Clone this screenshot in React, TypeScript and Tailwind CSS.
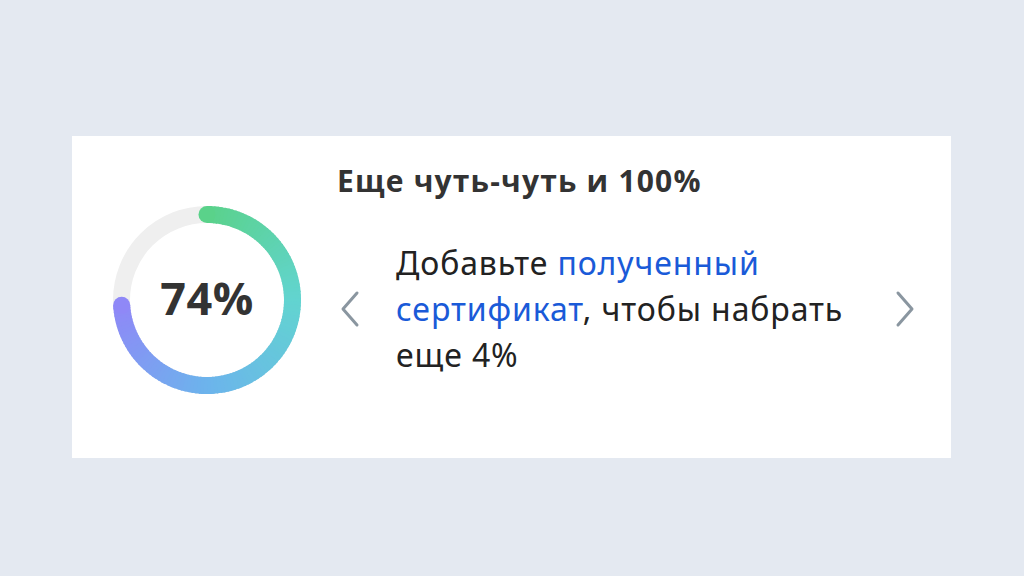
import React from "react";

const stops: [number, [number, number, number]][] = [
  [0, [90, 210, 138]],
  [0.25, [98, 212, 208]],
  [0.5, [108, 180, 236]],
  [0.74, [143, 136, 247]],
];

function colorAt(t: number) {
  for (let i = 0; i < stops.length - 1; i++) {
    const [a, ca] = stops[i];
    const [b, cb] = stops[i + 1];
    if (t >= a && t <= b) {
      const k = (t - a) / (b - a);
      const c = ca.map((v, j) => Math.round(v + (cb[j] - v) * k));
      return `rgb(${c[0]},${c[1]},${c[2]})`;
    }
  }
  const c = stops[stops.length - 1][1];
  return `rgb(${c[0]},${c[1]},${c[2]})`;
}

function Ring() {
  const size = 188;
  const cx = 94;
  const cy = 94;
  const r = 85.5;
  const sw = 17;
  const pct = 0.74;
  const n = 120;
  const pt = (t: number) => {
    const a = t * 2 * Math.PI - Math.PI / 2;
    return [cx + r * Math.cos(a), cy + r * Math.sin(a)];
  };
  const segs = [];
  for (let i = 0; i < n; i++) {
    const t0 = (pct * i) / n;
    const t1 = Math.min(pct, (pct * (i + 1)) / n + 0.002);
    const [x0, y0] = pt(t0);
    const [x1, y1] = pt(t1);
    segs.push(
      <path
        key={i}
        d={`M ${x0} ${y0} A ${r} ${r} 0 0 1 ${x1} ${y1}`}
        stroke={colorAt((t0 + t1) / 2)}
        strokeWidth={sw}
        fill="none"
      />
    );
  }
  const [sx, sy] = pt(0);
  const [ex, ey] = pt(pct);
  return (
    <div className="relative w-[188px] h-[188px]">
      <svg width={size} height={size} viewBox={`0 0 ${size} ${size}`}>
        <circle cx={cx} cy={cy} r={r} stroke="#efefef" strokeWidth={sw} fill="none" />
        {segs}
        <circle cx={sx} cy={sy} r={sw / 2} fill={colorAt(0)} />
        <circle cx={ex} cy={ey} r={sw / 2} fill={colorAt(pct)} />
      </svg>
      <div className="absolute inset-0 flex items-center justify-center pb-[6px]">
        <span
          className="text-[45px] font-bold text-[#333333] tracking-[0.5px] leading-none"
          style={{ fontFamily: '"Open Sans", sans-serif' }}
        >
          74%
        </span>
      </div>
    </div>
  );
}

function Chevron({ dir }: { dir: "left" | "right" }) {
  return (
    <svg width="22" height="38" viewBox="0 0 22 38" fill="none">
      <path
        d={dir === "left" ? "M18 3 L4 19 L18 35" : "M4 3 L18 19 L4 35"}
        stroke="#8a96a0"
        strokeWidth="3"
        strokeLinecap="round"
        strokeLinejoin="round"
      />
    </svg>
  );
}

export default function App() {
  return (
    <div
      className="w-[1024px] h-[576px] bg-[#e4e9f1] pt-[136px] pl-[72px]"
      style={{ fontFamily: '"Open Sans", sans-serif' }}
    >
      <div className="w-[879px] h-[322px] bg-white flex items-start pl-[41px]">
        <div className="mt-[70px]">
          <Ring />
        </div>
        <div className="ml-[36px] flex flex-col">
          <div className="mt-[25px] text-[30px] font-bold text-[#333333] leading-[40px] tracking-[1.2px]">
            Еще чуть-чуть и 100%
          </div>
          <div className="mt-[39px] flex items-center">
            <div className="ml-[2px] w-[22px]">
              <Chevron dir="left" />
            </div>
            <div
              className="ml-[35px] w-[462px] text-[32px] leading-[46px] text-[#222222] tracking-[0.9px]"
              style={{ fontFamily: '"Noto Sans", sans-serif' }}
            >
              Добавьте <span className="text-[#1a5ad8]">полученный сертификат</span>, чтобы набрать
              еще 4%
            </div>
            <div className="ml-[36px] w-[22px]">
              <Chevron dir="right" />
            </div>
          </div>
        </div>
      </div>
    </div>
  );
}
